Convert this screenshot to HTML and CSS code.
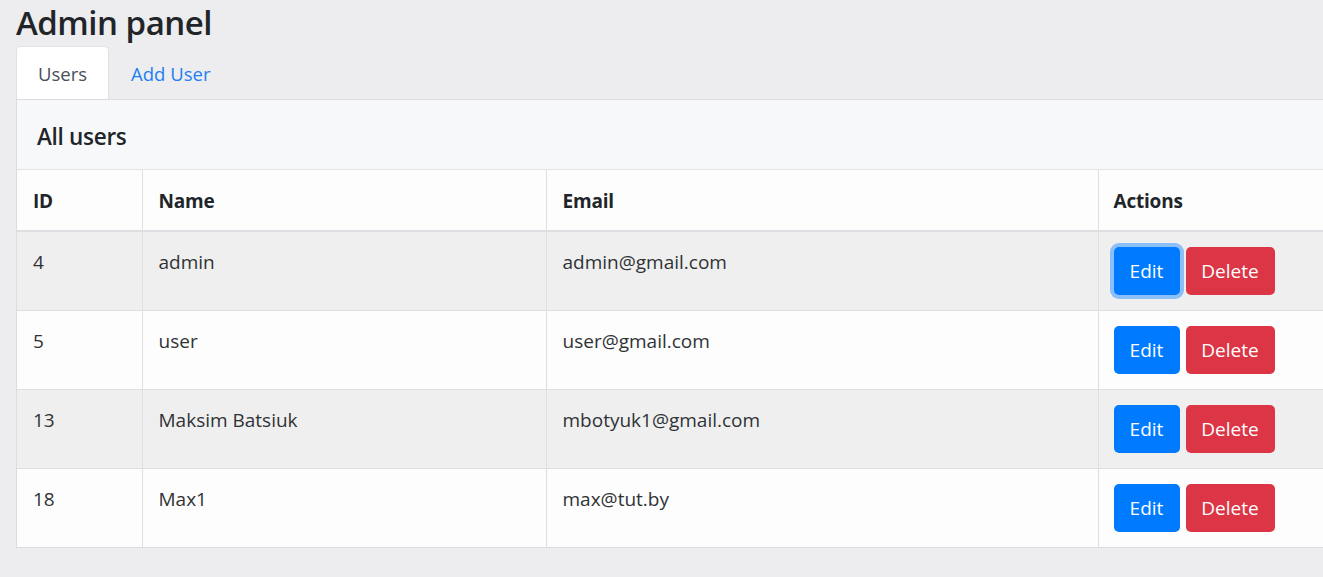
FILE: index.html
```html
<!DOCTYPE html>
<html>
<head>
<meta charset="utf-8">
<link rel="stylesheet" href="styles.css">
</head>
<body>
<div class="page">
  <h2 class="title">Admin panel</h2>
  <ul class="tabs">
    <li class="tab active">Users</li>
    <li class="tab link">Add User</li>
  </ul>
  <div class="card">
    <div class="card-header"><h5>All users</h5></div>
    <table class="users">
      <colgroup>
        <col class="c-id"><col class="c-name"><col class="c-email"><col class="c-actions">
      </colgroup>
      <thead>
        <tr><th>ID</th><th>Name</th><th>Email</th><th>Actions</th></tr>
      </thead>
      <tbody>
        <tr class="odd"><td>4</td><td>admin</td><td>admin@gmail.com</td><td><div class="actions"><button class="btn edit focus">Edit</button><button class="btn del">Delete</button></div></td></tr>
        <tr><td>5</td><td>user</td><td>user@gmail.com</td><td><div class="actions"><button class="btn edit">Edit</button><button class="btn del">Delete</button></div></td></tr>
        <tr class="odd"><td>13</td><td>Maksim Batsiuk</td><td>mbotyuk1@gmail.com</td><td><div class="actions"><button class="btn edit">Edit</button><button class="btn del">Delete</button></div></td></tr>
        <tr><td>18</td><td>Max1</td><td>max@tut.by</td><td><div class="actions"><button class="btn edit">Edit</button><button class="btn del">Delete</button></div></td></tr>
      </tbody>
    </table>
  </div>
</div>
</body>
</html>
```
FILE: styles.css
```css
html, body {
  margin: 0;
  padding: 0;
  background: #ededef;
  overflow: hidden;
  font-family: "Open Sans", "Noto Sans", sans-serif;
  color: #212529;
}
.page {
  padding: 0 0 0 16px;
  width: 1420px;
}
.title {
  margin: 0;
  font-size: 33px;
  font-weight: 600;
  line-height: 46px;
  letter-spacing: -0.5px;
}
.tabs {
  list-style: none;
  margin: 0;
  padding: 0;
  display: flex;
  height: 53px;
}
.tab {
  font-size: 18.5px;
  padding: 0 21px;
  line-height: 53px;
  border: 1px solid transparent;
  border-bottom: 0;
  border-radius: 5px 5px 0 0;
}
.tab.active {
  background: #ffffff;
  color: #495057;
  border-color: #dee2e6;
}
.tab.link {
  color: #1f7ff0;
}
.card {
  background: #fdfdfd;
  border: 1px solid #dcdcde;
  border-right: 0;
}
.card-header {
  background: #f7f8fa;
  height: 70px;
  box-sizing: border-box;
  border-bottom: 1px solid #e2e3e6;
  display: flex;
  align-items: center;
  padding: 3px 20px 0;
}
.card-header h5 {
  margin: 0;
  font-size: 22.5px;
  font-weight: 600;
  letter-spacing: -0.3px;
}
.users {
  border-collapse: collapse;
  table-layout: fixed;
  width: 1404px;
  font-size: 19px;
}
.c-id { width: 125px; }
.c-name { width: 404px; }
.c-email { width: 552px; }
.users th, .users td {
  text-align: left;
  vertical-align: top;
  padding: 15px 15px 15px 16px;
  border-left: 1px solid #dedfe2;
  line-height: 30px;
}
.users th:first-child, .users td:first-child { border-left: 0; }
.users th {
  font-weight: 700;
  background: #fdfdfd;
  border-bottom: 2.5px solid #dedfe2;
  height: 30px;
  padding-top: 16px;
  padding-bottom: 14px;
  letter-spacing: -0.2px;
}
.users td {
  color: #303336;
  border-top: 1px solid #dedfe2;
  height: 48px;
}
.users tbody tr:first-child td { border-top: 0; }
.users tr.odd td { background: #efefef; }
.users td:last-child, .users th:last-child { padding-left: 15px; }
.actions {
  display: flex;
  gap: 6px;
}
.btn {
  height: 48px;
  border: 0;
  border-radius: 5px;
  color: #ffffff;
  font-family: inherit;
  font-size: 19px;
  padding: 0;
  cursor: pointer;
}
.btn.edit { background: #007bff; width: 66px; }
.btn.del { background: #dc3545; width: 89px; }
.btn.focus { box-shadow: 0 0 0 4px rgba(38, 143, 255, 0.5); }
```
